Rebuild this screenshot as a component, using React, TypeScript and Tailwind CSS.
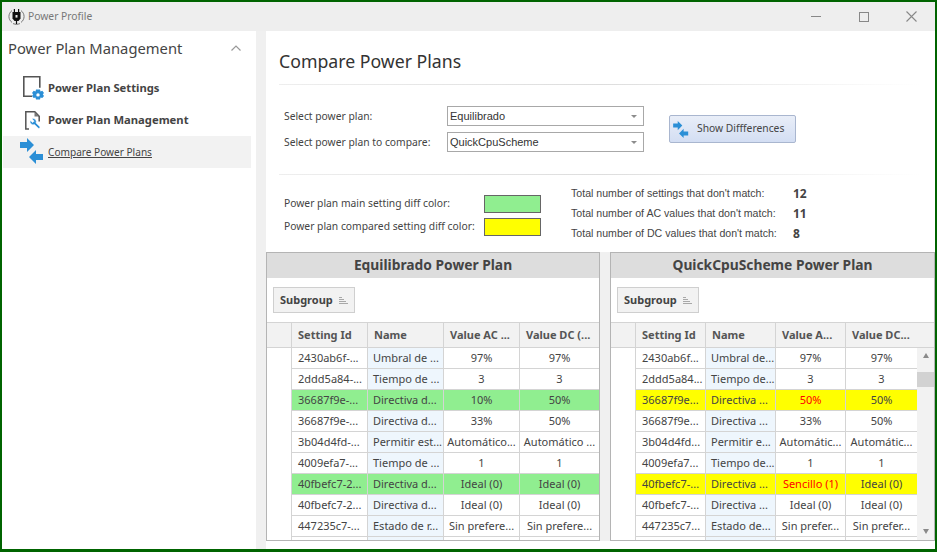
const uiFont = "font-['Noto_Sans','Liberation_Sans',sans-serif]";
const narrowFont = "font-['Liberation_Sans',sans-serif]";

type Row = { id: string; name: string; ac: string; dc: string; hl?: boolean; acRed?: boolean };

const leftRows: Row[] = [
  { id: "2430ab6f-...", name: "Umbral de ...", ac: "97%", dc: "97%" },
  { id: "2ddd5a84-...", name: "Tiempo de ...", ac: "3", dc: "3" },
  { id: "36687f9e-...", name: "Directiva d...", ac: "10%", dc: "50%", hl: true },
  { id: "36687f9e-...", name: "Directiva d...", ac: "33%", dc: "50%" },
  { id: "3b04d4fd-...", name: "Permitir est...", ac: "Automático...", dc: "Automático ..." },
  { id: "4009efa7-...", name: "Tiempo de ...", ac: "1", dc: "1" },
  { id: "40fbefc7-2...", name: "Directiva d...", ac: "Ideal (0)", dc: "Ideal (0)", hl: true },
  { id: "40fbefc7-2...", name: "Directiva d...", ac: "Ideal (0)", dc: "Ideal (0)" },
  { id: "447235c7-...", name: "Estado de r...", ac: "Sin prefere...", dc: "Sin prefere..." },
];

const rightRows: Row[] = [
  { id: "2430ab6f...", name: "Umbral de...", ac: "97%", dc: "97%" },
  { id: "2ddd5a84...", name: "Tiempo de...", ac: "3", dc: "3" },
  { id: "36687f9e...", name: "Directiva ...", ac: "50%", dc: "50%", hl: true, acRed: true },
  { id: "36687f9e...", name: "Directiva ...", ac: "33%", dc: "50%" },
  { id: "3b04d4fd...", name: "Permitir e...", ac: "Automátic...", dc: "Automátic..." },
  { id: "4009efa7...", name: "Tiempo de...", ac: "1", dc: "1" },
  { id: "40fbefc7-...", name: "Directiva ...", ac: "Sencillo (1)", dc: "Ideal (0)", hl: true, acRed: true },
  { id: "40fbefc7-...", name: "Directiva ...", ac: "Ideal (0)", dc: "Ideal (0)" },
  { id: "447235c7...", name: "Estado de...", ac: "Sin prefer...", dc: "Sin prefer..." },
];

function SortIcon() {
  return (
    <svg width="9" height="8" viewBox="0 0 9 8" className="ml-[6px] mt-[1px]">
      <path d="M0 .5h3M0 2.5h5M0 4.5h7M0 6.5h9" stroke="#a8a8a8" strokeWidth="1" />
    </svg>
  );
}

function ArrowsIcon({ w = 24, h = 26 }: { w?: number; h?: number }) {
  return (
    <svg width={w} height={h} viewBox="0 0 24 26">
      <path d="M0 4h7V0l7 7-7 7v-4H0z" fill="#2b8fd6" />
      <path d="M23 16h-7v-4l-7 7 7 7v-4h7z" fill="#2b8fd6" />
    </svg>
  );
}

function SettingsDocIcon() {
  return (
    <svg width="21" height="25" viewBox="0 0 21 25">
      <path d="M9 20.2H.8V.8h16v11" fill="none" stroke="#555" strokeWidth="1.6" />
      <path d="M13 13.6h4l.5 1.8 1.8-.7 1.7 2.2-1.2 1.4 1.2 1.6-1.7 2.2-1.8-.7-.5 2h-4l-.5-2-1.8.7-1.7-2.2 1.2-1.6-1.2-1.4 1.7-2.2 1.8.7z" fill="#2b8fd6" />
      <circle cx="15" cy="18.9" r="1.7" fill="#fff" />
    </svg>
  );
}

function WrenchDocIcon() {
  return (
    <svg width="18" height="21" viewBox="0 0 18 21">
      <path d="M5 19H1.8V1.8h9l4.4 4.6v5" fill="none" stroke="#555" strokeWidth="1.5" />
      <path d="M10.5 2v4.5h4.7z" fill="#777" />
      <g transform="translate(17.5 7.5) scale(-0.52 0.52)">
        <path
          d="M14.7 6.3a1 1 0 0 0 0 1.4l1.6 1.6a1 1 0 0 0 1.4 0l3.77-3.77a6 6 0 0 1-7.94 7.94l-6.91 6.91a2.12 2.12 0 0 1-3-3l6.91-6.91a6 6 0 0 1 7.94-7.94l-3.76 3.76z"
          fill="#2b8fd6"
          stroke="#fff"
          strokeWidth="1"
        />
      </g>
    </svg>
  );
}

function PlugLogo() {
  return (
    <svg width="17" height="17" viewBox="0 0 17 17">
      <path d="M4 2.6a7.2 7.2 0 0 0 0 11.8M13 2.6a7.2 7.2 0 0 1 0 11.8M5 15.6a7.5 7.5 0 0 0 7 0" fill="none" stroke="#777" strokeWidth="1" />
      <path d="M6.4 1v3M10.6 1v3" stroke="#111" strokeWidth="1.2" />
      <path d="M4.5 4h8v6.5l-2 2.5h-4l-2-2.5z" fill="#111" />
      <path d="M8.5 13v3" stroke="#111" strokeWidth="1.2" />
      <rect x="7.5" y="7" width="2" height="2.6" fill="#e8e8e8" />
    </svg>
  );
}

function Divider() {
  return <div className="h-px w-[641px] bg-gradient-to-r from-[#eeeeee] via-[#dddddd] to-white" />;
}

function Select({ value }: { value: string }) {
  return (
    <div className={`flex h-[20px] w-[197px] items-center justify-between border border-[#a8a8a8] bg-white pl-[2px] pr-[6px] text-[11px] text-[#333] ${narrowFont}`}>
      <span>{value}</span>
      <span className="h-0 w-0 border-x-[3px] border-t-[3px] border-x-transparent border-t-[#8c8c8c]" />
    </div>
  );
}

function Plan({
  title,
  rows,
  cols,
  headers,
  scrollbar,
  width,
}: {
  title: string;
  rows: Row[];
  cols: string;
  headers: string[];
  scrollbar?: boolean;
  width: string;
}) {
  const hlBg = scrollbar ? "bg-[#ffff00]" : "bg-[#90ee90]";
  return (
    <div className={`flex h-[289px] shrink-0 flex-col overflow-hidden whitespace-nowrap border border-[#b4b4b4] bg-white ${width}`}>
      <div className="flex h-[25px] shrink-0 items-center justify-center bg-[#dddddd] text-[13.8px] font-bold text-[#444]">
        {title}
      </div>
      <div className="flex h-[44px] shrink-0 items-center pl-[6px]">
        <div className="flex h-[26px] items-center border border-[#cfcfcf] bg-[#f2f2f2] px-[6px] text-[11px] font-bold text-[#444]">
          Subgroup
          <SortIcon />
        </div>
      </div>
      <div className="flex min-h-0 flex-1">
        <div className="min-w-0 flex-1 overflow-hidden">
          <div className={`grid h-[26px] border-y border-[#d4d4d4] bg-[#f2f2f2] text-[11px] font-bold text-[#555] ${cols}`}>
            <div className="border-r border-[#d4d4d4]" />
            {headers.map((h) => (
              <div key={h} className="flex items-center border-r border-[#d4d4d4] px-[6px] last:border-r-0">
                {h}
              </div>
            ))}
          </div>
          {rows.concat([{ id: "", name: "", ac: "", dc: "" }]).map((r, i) => (
            <div key={i} className={`grid h-[21px] text-[11px] text-[#444] ${cols}`}>
              <div className="border-r border-[#d4d4d4] bg-white" />
              <div className={`flex items-center border-r border-b border-[#d4d4d4] px-[6px] ${r.hl ? hlBg : "bg-white"}`}>{r.id}</div>
              <div className={`flex items-center border-r border-b border-[#d4d4d4] px-[5px] ${r.hl ? hlBg : "bg-[#eef6fd]"}`}>{r.name}</div>
              <div className={`flex items-center justify-center border-r border-b border-[#d4d4d4] ${r.hl ? hlBg : "bg-white"} ${r.acRed ? "text-[#ff0000]" : ""}`}>{r.ac}</div>
              <div className={`flex items-center justify-center border-b border-[#d4d4d4] ${r.hl ? hlBg : "bg-white"}`}>{r.dc}</div>
            </div>
          ))}
        </div>
        {scrollbar && (
          <div className="flex w-[17px] shrink-0 flex-col border-t border-[#d4d4d4] bg-[#f2f2f2]">
            <div className="h-[25px] border-b border-[#d4d4d4]" />
            <div className="flex h-[24px] items-start justify-center pt-[5px]">
              <span className="h-0 w-0 border-x-[3.5px] border-b-[5px] border-x-transparent border-b-[#8a8a8a]" />
            </div>
            <div className="h-[15px] bg-[#d2d2d2]" />
            <div className="flex flex-1 items-end justify-center pb-[6px]">
              <span className="h-0 w-0 border-x-[3.5px] border-t-[5px] border-x-transparent border-t-[#8a8a8a]" />
            </div>
          </div>
        )}
      </div>
    </div>
  );
}

export default function App() {
  return (
    <div className={`flex h-[552px] w-[937px] flex-col border-x-2 border-t-2 border-b-[3px] border-[#006400] bg-[#f0f0f0] ${uiFont}`}>
      {/* title bar */}
      <div className="flex h-[29px] shrink-0 items-center bg-[#eeeeee] pl-[6px] text-[#777]">
        <PlugLogo />
        <span className="ml-[3px] text-[10.3px]">Power Profile</span>
        <div className="ml-auto flex items-center">
          <div className="mr-[38px] h-px w-[10px] bg-[#888]" />
          <div className="mr-[37px] h-[10px] w-[10px] border border-[#888]" />
          <svg width="11" height="11" viewBox="0 0 11 11" className="mr-[18px]">
            <path d="M.5.5l10 10M10.5.5l-10 10" stroke="#888" strokeWidth="1.1" />
          </svg>
        </div>
      </div>

      <div className="flex min-h-0 flex-1">
        {/* sidebar */}
        <aside className="w-[254px] shrink-0 whitespace-nowrap bg-white">
          <div className="flex h-[34px] items-center justify-between pl-[6px] pr-[15px] text-[14.75px] text-[#444]">
            <span>Power Plan Management</span>
            <svg width="10" height="6" viewBox="0 0 10 6"><path d="M.5 5.5L5 1l4.5 4.5" fill="none" stroke="#999" strokeWidth="1.2" /></svg>
          </div>
          <div className="mt-[7px] flex h-[32px] items-center pl-[21px] text-[11.25px] font-bold text-[#444]">
            <SettingsDocIcon />
            <span className="ml-[4px]">Power Plan Settings</span>
          </div>
          <div className="flex h-[32px] items-center pl-[22px] text-[11.25px] font-bold text-[#444]">
            <WrenchDocIcon />
            <span className="ml-[6px]">Power Plan Management</span>
          </div>
          <div className="mx-[1px] flex h-[32px] w-[248px] items-center bg-[#f2f2f2] pl-[17px] text-[10.1px] text-[#444]">
            <span className="-mt-[3px]">
              <ArrowsIcon />
            </span>
            <span className="ml-[4px] pt-[2px] underline">Compare Power Plans</span>
          </div>
        </aside>

        {/* main */}
        <main className="ml-[10px] flex min-w-0 flex-1 flex-col">
          <div className="h-[221px] shrink-0 whitespace-nowrap bg-white pl-[13px]">
            <div className="flex h-[53px] items-center pt-[7px] text-[17.7px] text-[#333]">Compare Power Plans</div>
            <Divider />
            <div className="flex items-center pl-[5px] pt-[21px] text-[10.3px] text-[#444]">
              <div className="flex flex-col gap-[6px]">
                <div className="flex items-center">
                  <span className="w-[163px] pt-[2px]">Select power plan:</span>
                  <Select value="Equilibrado" />
                </div>
                <div className="flex items-center">
                  <span className="w-[163px] pt-[2px]">Select power plan to compare:</span>
                  <Select value="QuickCpuScheme" />
                </div>
              </div>
              <button className="ml-[25px] flex h-[28px] w-[127px] items-center rounded-[2px] border border-[#a9b6cf] bg-gradient-to-b from-[#e9eef8] to-[#d3def3] pl-[3px] text-[10.3px] text-[#444]">
                <ArrowsIcon w={16} h={17} />
                <span className="ml-[8px]">Show Diffferences</span>
              </button>
            </div>
            <div className="mt-[22px]">
              <Divider />
            </div>
            <div className="flex pl-[5px] text-[10.3px] text-[#444]">
              <div className="flex flex-col gap-[5px] pt-[20px]">
                <div className="flex items-center">
                  <span className="w-[200px]">Power plan main setting diff color:</span>
                  <span className="h-[18px] w-[57px] border border-[#666] bg-[#90ee90]" />
                </div>
                <div className="flex items-center">
                  <span className="w-[200px]">Power plan compared setting diff color:</span>
                  <span className="h-[18px] w-[57px] border border-[#666] bg-[#ffff00]" />
                </div>
              </div>
              <div className={`ml-[30px] flex flex-col gap-[5px] pt-[11px] text-[10.6px] ${narrowFont}`}>
                {[
                  ["Total number of settings that don't match:", "12"],
                  ["Total number of AC values that don't match:", "11"],
                  ["Total number of DC values that don't match:", "8"],
                ].map(([label, n]) => (
                  <div key={label} className="flex h-[15px] items-center">
                    <span className="w-[222px]">{label}</span>
                    <span className={`text-[12px] font-bold ${uiFont}`}>{n}</span>
                  </div>
                ))}
              </div>
            </div>
          </div>
          <div className="flex min-h-0 flex-1 gap-[10px]">
            <Plan
              title="Equilibrado Power Plan"
              rows={leftRows}
              width="w-[334px]"
              cols="grid-cols-[25px_76px_76px_76px_1fr]"
              headers={["Setting Id", "Name", "Value AC ...", "Value DC (..."]}
            />
            <Plan
              title="QuickCpuScheme Power Plan"
              rows={rightRows}
              scrollbar
              width="w-[325px]"
              cols="grid-cols-[25px_70px_70px_70px_1fr]"
              headers={["Setting Id", "Name", "Value A...", "Value DC..."]}
            />
          </div>
          <div className="h-[8px] shrink-0 bg-white" />
        </main>
      </div>
    </div>
  );
}
